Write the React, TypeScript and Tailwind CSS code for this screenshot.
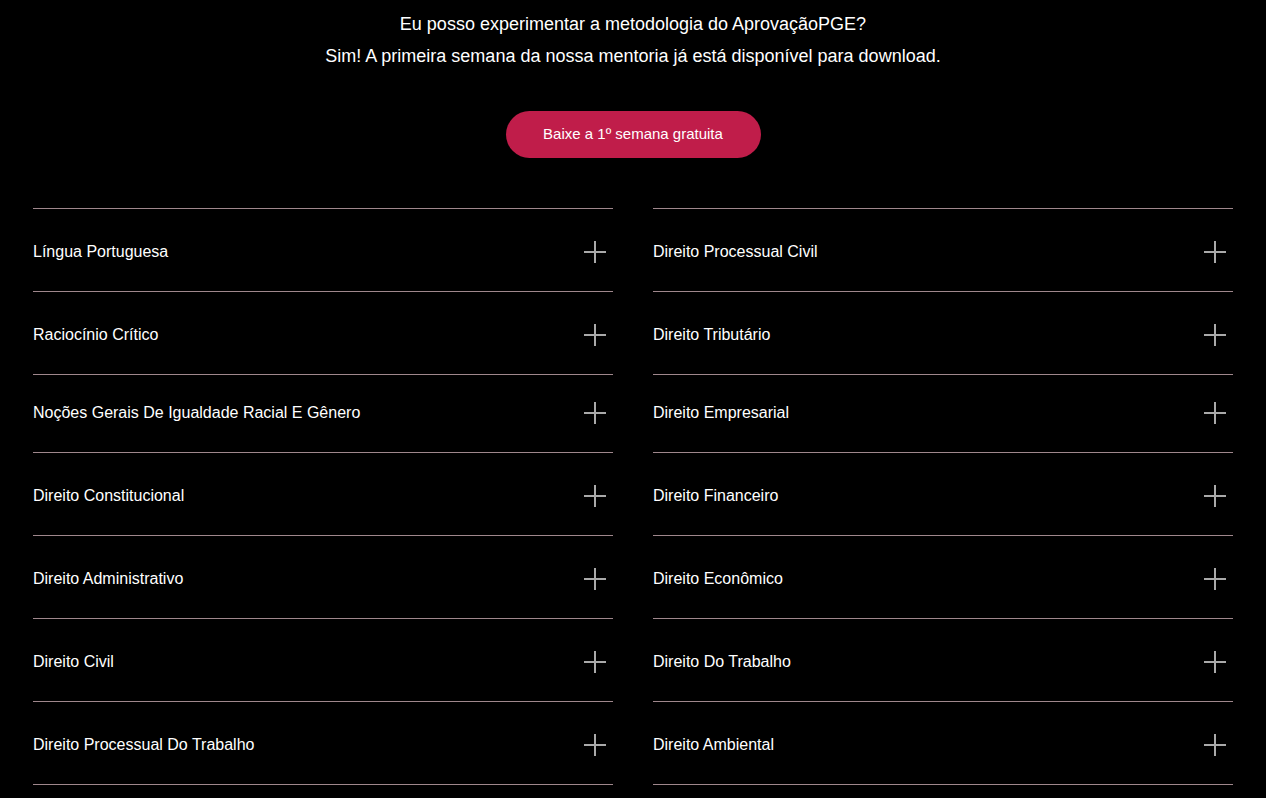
import React from "react";

const left = [
  "Língua Portuguesa",
  "Raciocínio Crítico",
  "Noções Gerais De Igualdade Racial E Gênero",
  "Direito Constitucional",
  "Direito Administrativo",
  "Direito Civil",
  "Direito Processual Do Trabalho",
];

const right = [
  "Direito Processual Civil",
  "Direito Tributário",
  "Direito Empresarial",
  "Direito Financeiro",
  "Direito Econômico",
  "Direito Do Trabalho",
  "Direito Ambiental",
];

function Plus() {
  return (
    <svg width="22" height="22" viewBox="0 0 22 22" className="shrink-0">
      <path d="M11 0V22M0 11H22" stroke="#a9a9a9" strokeWidth="2" />
    </svg>
  );
}

function Row({ label, short }: { label: string; short?: boolean }) {
  return (
    <div
      className={`flex items-center justify-between border-t border-[#9f878c] pr-[7px] ${
        short ? "h-[78px] pb-[2px]" : "h-[83px] pt-[4px]"
      }`}
    >
      <span className="text-[16px] text-white">{label}</span>
      <Plus />
    </div>
  );
}

function Column({ items }: { items: string[] }) {
  return (
    <div className="flex flex-col border-b border-[#9f878c]">
      {items.map((t, i) => (
        <Row key={t} label={t} short={i === 2} />
      ))}
    </div>
  );
}

export default function App() {
  return (
    <div
      className="min-h-screen w-full bg-black text-white"
      style={{ fontFamily: '"Liberation Sans", Arial, sans-serif' }}
    >
      <div className="pt-[8px] text-center text-[18px] leading-[32px] text-white">
        <p>Eu posso experimentar a metodologia do AprovaçãoPGE?</p>
        <p>Sim! A primeira semana da nossa mentoria já está disponível para download.</p>
      </div>

      <div className="mt-[39px] flex justify-center">
        <button className="h-[47px] w-[255px] rounded-full bg-[#c01d4a] text-[15px] text-white">
          Baixe a 1º semana gratuita
        </button>
      </div>

      <div className="mx-auto mt-[50px] grid max-w-[1200px] grid-cols-2 gap-x-[40px]">
        <Column items={left} />
        <Column items={right} />
      </div>
    </div>
  );
}
